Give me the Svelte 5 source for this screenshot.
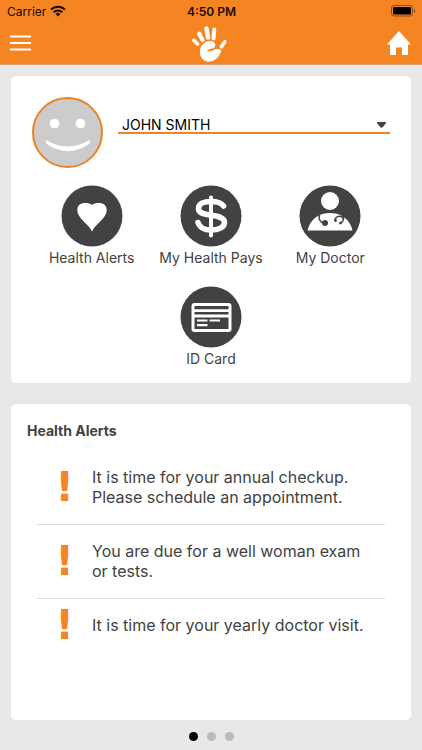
<script lang="ts">
	const members = ['JOHN SMITH'];
	let member = $state(members[0]);

	const shortcuts = [
		{ icon: 'heart', label: 'Health Alerts' },
		{ icon: 'dollar', label: 'My Health Pays' },
		{ icon: 'doctor', label: 'My Doctor' },
		{ icon: 'card', label: 'ID Card' }
	];

	const alerts = [
		'It is time for your annual checkup. Please schedule an appointment.',
		'You are due for a well woman exam or tests.',
		'It is time for your yearly doctor visit.'
	];

	const pages = 3;
	let page = $state(0);
</script>

<div class="app">
	<header>
		<div class="status">
			<span class="carrier">
				Carrier
				<svg width="16" height="12" viewBox="0 0 16 12" aria-hidden="true">
					<g fill="none" stroke="#180c02" stroke-width="2">
						<path d="M1 4.6A10 10 0 0 1 15 4.6" />
						<path d="M3.6 7.2A6.3 6.3 0 0 1 12.4 7.2" />
					</g>
					<path d="M8 11.4 5.6 9A3.4 3.4 0 0 1 10.4 9Z" fill="#180c02" />
				</svg>
			</span>
			<span class="time">4:50 PM</span>
			<span class="battery">
				<svg width="25" height="12" viewBox="0 0 25 12" aria-hidden="true">
					<rect x="0.5" y="0.5" width="21" height="10.5" rx="2.5" fill="none" stroke="#8a4a14" />
					<rect x="2" y="2" width="18" height="7.5" rx="1.2" fill="#000" />
					<path d="M23 4v4c1.6-.6 1.6-3.4 0-4z" fill="#8a4a14" />
				</svg>
			</span>
		</div>
		<div class="toolbar">
			<button class="menu" aria-label="Menu">
				<svg width="21" height="16" viewBox="0 0 21 16">
					<path d="M0 1.5h21M0 8h21M0 14.5h21" stroke="#fff" stroke-width="2" />
				</svg>
			</button>
			<svg class="logo" width="38" height="38" viewBox="0 0 38 38" role="img" aria-label="Hand logo">
				<g stroke="#fff" stroke-linecap="round" fill="none">
					<path d="M1.8 16.4 5.6 20" stroke-width="3.6" />
					<path d="M7.2 9.8 10.5 16" stroke-width="4.2" />
					<path d="M14.5 4.4 16 13.5" stroke-width="4.4" />
					<path d="M22.3 5.6 21.5 14.5" stroke-width="4" />
					<path d="M32.8 17.8 29.4 22.8" stroke-width="3.6" />
				</g>
				<path
					d="M8 28C8 21 13 17 18 17C21.5 17 23.5 19 23.3 21.5C23.1 23.8 21 24.5 19 24.7C17 25 15.500 26 15 28C17 26.8 18.5 26.8 20 27.2C22 24.5 27 24.3 28.8 26C30 29 24 37.5 17.5 37.8C12 38 8 34 8 28Z"
					fill="#fff"
				/>
			</svg>
			<a class="home" href="#home" aria-label="Home">
				<svg width="24" height="24" viewBox="0 0 24 24">
					<path d="M12 0 24 13.5H21V24H15V16.5H9V24H3V13.5H0Z" fill="#fff" />
				</svg>
			</a>
		</div>
	</header>

	<main>
		<section class="card profile">
			<div class="member">
				<svg class="avatar" width="72" height="72" viewBox="0 0 72 72" role="img" aria-label="Profile picture">
					<circle cx="35.5" cy="35.5" r="34.5" fill="#ccc" stroke="#ee8227" stroke-width="2" />
					<circle cx="22.5" cy="26.5" r="4.8" fill="#fff" />
					<circle cx="48.5" cy="26.5" r="4.8" fill="#fff" />
					<path d="M14 43Q36 56 57.5 43V46.5Q36 62 14 46.5Z" fill="#fff" />
				</svg>
				<div class="picker">
					<select aria-label="Member" bind:value={member}>
						{#each members as name}
							<option>{name}</option>
						{/each}
					</select>
					<svg class="arrow" width="9" height="6" viewBox="0 0 9 6" aria-hidden="true">
						<path d="M0 0H9V1L5.5 5.5H3.5L0 1Z" fill="#424242" />
					</svg>
				</div>
			</div>

			<nav class="shortcuts">
				{#each shortcuts as shortcut}
					<button class="shortcut">
						<svg width="62" height="62" viewBox="0 0 62 62" aria-hidden="true">
							<circle cx="31" cy="31" r="30.5" fill="#424242" />
							{#if shortcut.icon === 'heart'}
								<path
									d="M31 46.500C28 39 16.3 34 16.3 25C16.3 20.5 19.5 18 24 18C27 18 29.5 18.5 31 20C32.5 18.5 35 18 38 18C42.5 18 45.7 20.5 45.7 25C45.7 34 34 39 31 46.5Z"
									fill="#fff"
								/>
							{:else if shortcut.icon === 'dollar'}
								<g fill="none" stroke="#fff" stroke-linecap="round">
									<path d="M31 12.5V50.5" stroke-width="4" />
									<path
										d="M43.5 21C41.5 18 37 16.5 31 16.5C23.5 16.5 18.5 19 18.5 23.5C18.5 33.5 44.5 27 44.5 37.5C44.5 42.5 38.5 45 31 45C24.5 45 19.5 42.5 18 37.5"
										stroke-width="5.6"
									/>
								</g>
							{:else if shortcut.icon === 'doctor'}
								<circle cx="31" cy="16" r="9" fill="#fff" />
								<path d="M8.5 45.5C11 34 20 28 31 28S51 34 53.5 45.5Z" fill="#fff" />
								<g fill="none" stroke="#424242" stroke-width="1.5">
									<path d="M20.5 29.5C19.5 33.5 20.5 37.5 25 38" />
									<path d="M42.5 29C45.5 31 45.5 35 42 38.5M36.5 36C34.5 31.5 43 29.5 44 33.5" />
								</g>
								<circle cx="26" cy="38" r="3" fill="#424242" />
								<circle cx="36.5" cy="35.5" r="1.4" fill="#424242" />
								<circle cx="41.5" cy="38" r="1.4" fill="#424242" />
							{:else}
								<rect x="13" y="18.5" width="37" height="26" rx="1.5" fill="none" stroke="#fff" stroke-width="3" />
								<path d="M14 24.7H49M14 30H49" stroke="#fff" stroke-width="2.8" />
								<path d="M17 34.5H27.5M29.5 34.5H40M17 39.2H27.5" stroke="#fff" stroke-width="2.2" />
							{/if}
						</svg>
						<span>{shortcut.label}</span>
					</button>
				{/each}
			</nav>
		</section>

		<section class="card alerts">
			<h2>Health Alerts</h2>
			<ul>
				{#each alerts as alert}
					<li>
						<span class="mark" aria-hidden="true">!</span>
						<p>{alert}</p>
					</li>
				{/each}
			</ul>
		</section>
	</main>

	<div class="dots">
		{#each { length: pages } as _, i}
			<button
				class:active={i === page}
				aria-label={`Page ${i + 1}`}
				onclick={() => (page = i)}
			></button>
		{/each}
	</div>
</div>

<style>
	:global(body) {
		background: #e8e8e8;
	}

	.app {
		display: flex;
		flex-direction: column;
		min-height: 100vh;
		color: #424242;
		font-family: Inter, Roboto, sans-serif;
		font-size: 16px;
	}

	button {
		padding: 0;
		border: 0;
		background: none;
		color: inherit;
		font: inherit;
		cursor: pointer;
	}

	svg {
		display: block;
	}

	header {
		background: #f58423;
		border-bottom: 1px solid #dda172;
	}

	.status,
	.toolbar {
		display: grid;
		grid-template-columns: 1fr auto 1fr;
		align-items: center;
	}

	.status {
		height: 22px;
		padding: 0 6px 0 7px;
		color: #180c02;
		font-size: 12px;
	}

	.carrier {
		display: flex;
		align-items: center;
		gap: 4px;
	}

	.time {
		font-weight: 600;
	}

	.battery,
	.home {
		justify-self: end;
	}

	.toolbar {
		height: 42px;
		padding: 0 11px 0 10px;
	}

	.menu {
		justify-self: start;
	}

	main {
		display: flex;
		flex: 1;
		flex-direction: column;
		gap: 21px;
		padding: 11px 11px 0;
	}

	.card {
		border-radius: 5px;
		background: #fff;
	}

	.profile {
		padding: 21px 21px 14px;
	}

	.member {
		display: flex;
		align-items: flex-start;
		gap: 14px;
	}

	.avatar {
		flex: none;
	}

	.picker {
		display: flex;
		flex: 1;
		align-items: center;
		margin-top: 21px;
		border-bottom: 2px solid #ee8227;
	}

	select {
		flex: 1;
		height: 14px;
		padding: 0 4px;
		border: 0;
		background: none;
		color: #000;
		font-family: inherit;
		font-size: 14px;
		line-height: 14px;
		appearance: none;
	}

	.arrow {
		margin-right: 4px;
		pointer-events: none;
	}

	.shortcuts {
		display: flex;
		flex-wrap: wrap;
		justify-content: center;
		row-gap: 18px;
		margin-top: 16px;
	}

	.shortcut {
		display: flex;
		flex-direction: column;
		align-items: center;
		gap: 1px;
		width: calc(100% / 3);
	}

	.shortcut span {
		font-size: 14px;
		line-height: 20px;
	}

	.alerts {
		flex: 1;
		padding: 17px 26px 16px 16px;
	}

	h2 {
		margin: 0;
		font-size: 14px;
		font-weight: 700;
		line-height: 20px;
	}

	ul {
		margin: 10px 0 0 10px;
		padding: 0;
		list-style: none;
	}

	li {
		display: flex;
		align-items: center;
		padding: 16px 10px 17px 0;
		border-bottom: 1px solid #ddd;
	}

	li:last-child {
		border-bottom: 0;
	}

	.mark {
		width: 55px;
		color: #f58423;
		font-family: 'DejaVu Sans', sans-serif;
		font-size: 40px;
		font-weight: 700;
		line-height: 20px;
		text-align: center;
	}

	p {
		flex: 1;
		margin: 0;
		line-height: 20px;
	}

	.dots {
		display: flex;
		justify-content: center;
		gap: 9px;
		padding: 12px 0 9px;
	}

	.dots button {
		width: 9px;
		height: 9px;
		border-radius: 50%;
		background: #bbb;
	}

	.dots .active {
		background: #000;
	}
</style>
